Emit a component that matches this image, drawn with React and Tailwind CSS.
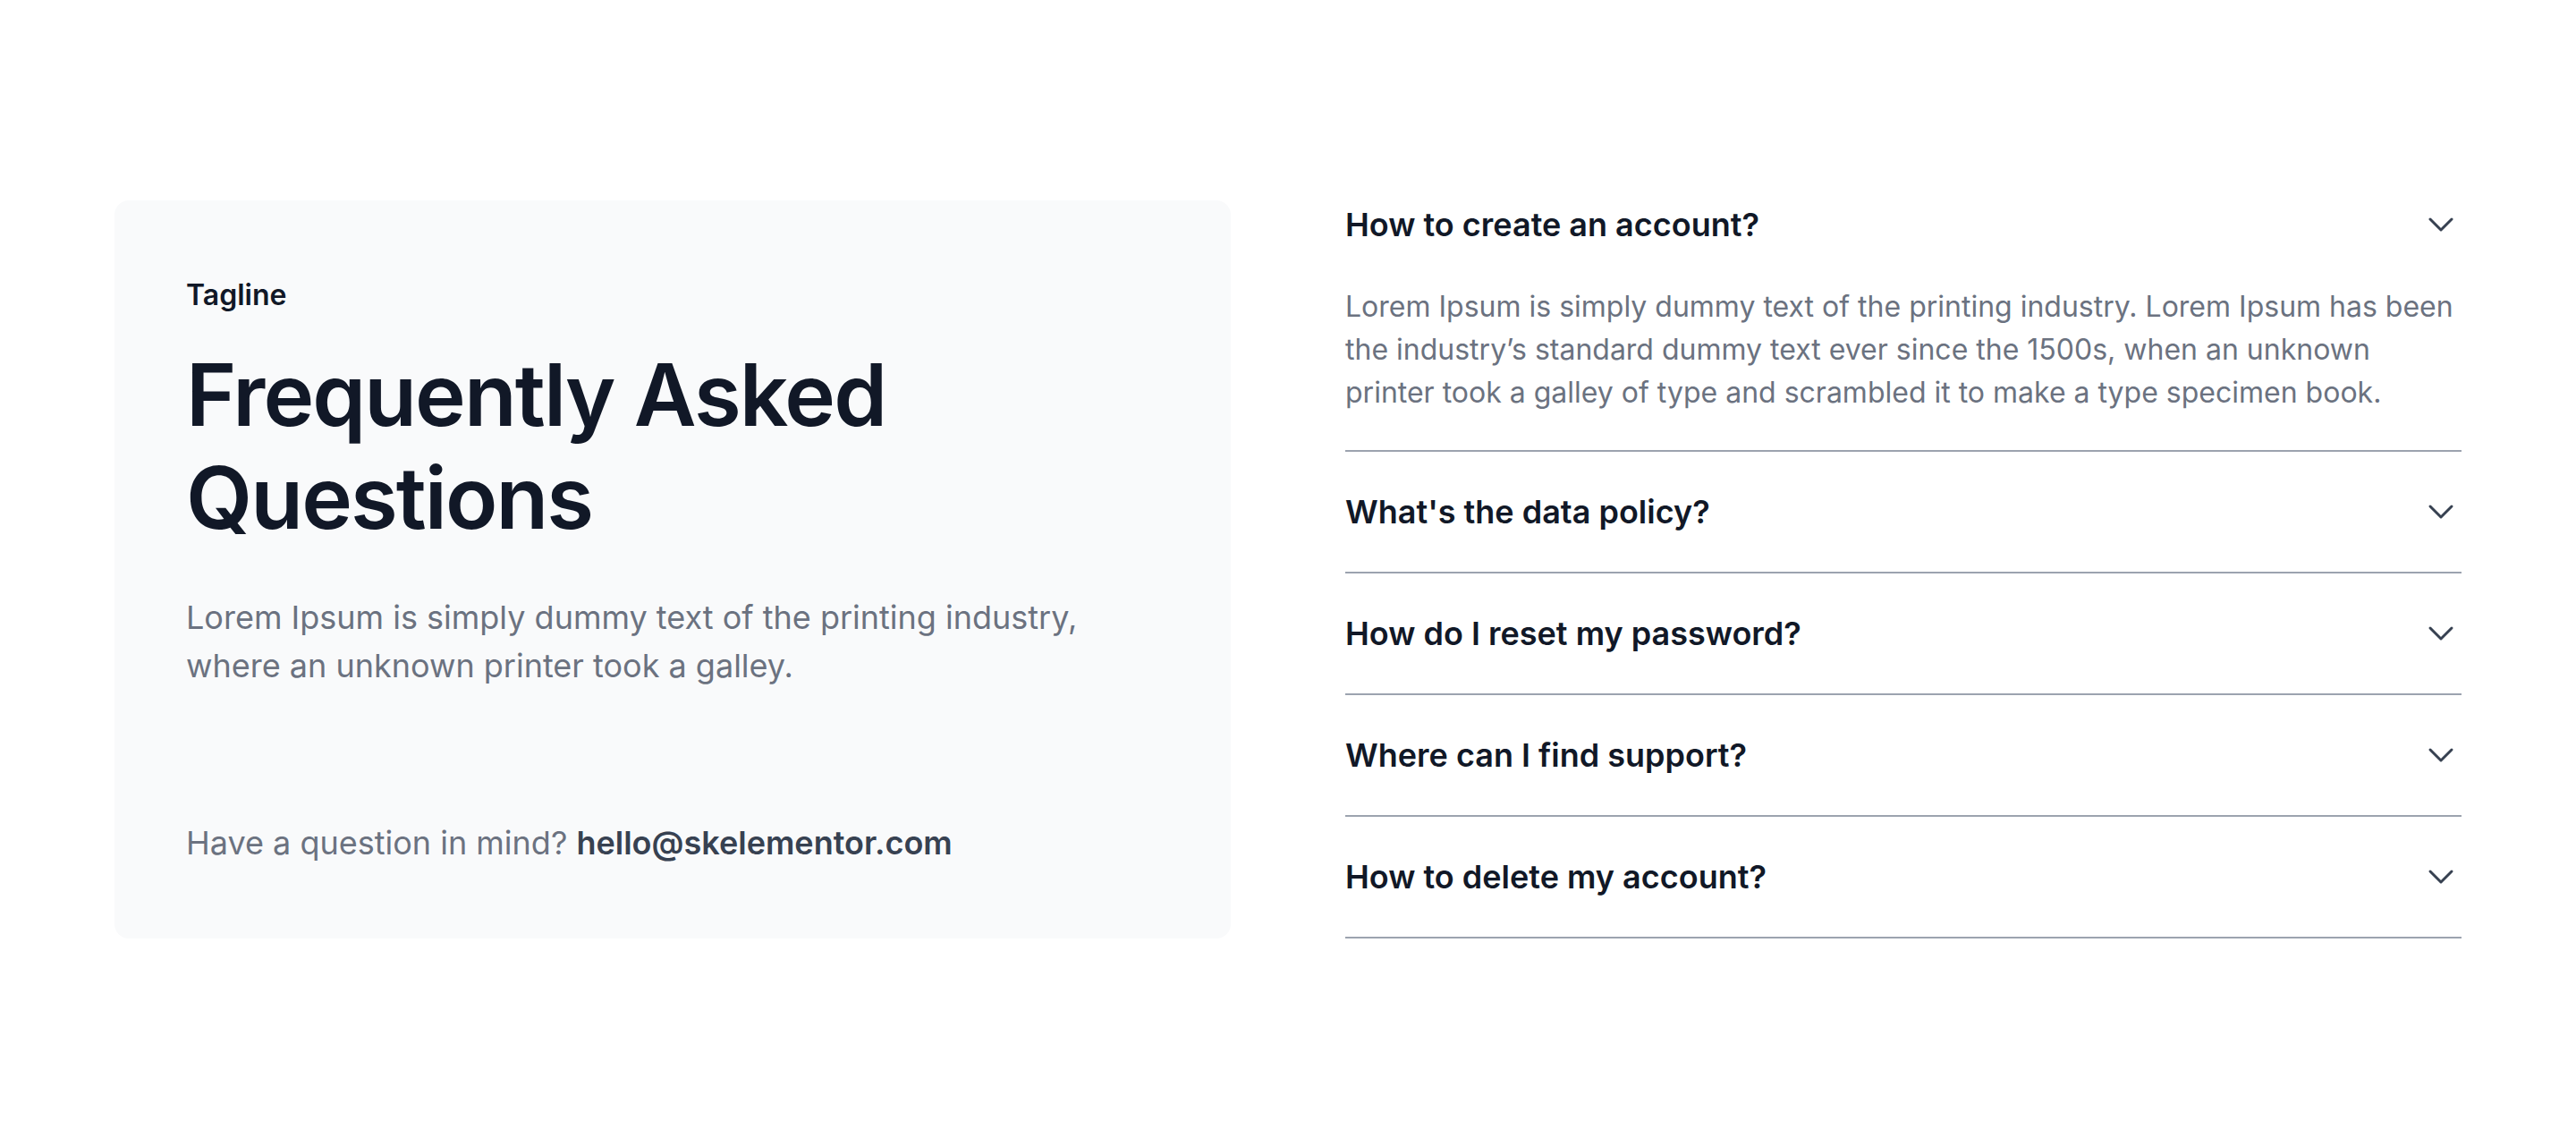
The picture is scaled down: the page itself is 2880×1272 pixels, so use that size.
import { ChevronDown } from 'lucide-react';

const faqs = [
  {
    q: 'How to create an account?',
    a: 'Lorem Ipsum is simply dummy text of the printing industry. Lorem Ipsum has been the industry’s standard dummy text ever since the 1500s, when an unknown printer took a galley of type and scrambled it to make a type specimen book.',
    open: true,
  },
  { q: "What's the data policy?" },
  { q: 'How do I reset my password?' },
  { q: 'Where can I find support?' },
  { q: 'How to delete my account?' },
];

export default function App() {
  return (
    <div
      className="min-h-screen bg-white px-[128px] pt-[224px] pb-[223px]"
      style={{ fontFamily: 'Inter, "Noto Sans", sans-serif' }}
    >
      <div className="grid grid-cols-2 gap-[128px]">
        {/* Intro card */}
        <div className="flex flex-col justify-between rounded-[16px] bg-[#f9fafb] p-[80px]">
          <div>
            <p className="pt-[2px] text-[32px] leading-[48px] font-semibold text-[#111827]">Tagline</p>
            <h1 className="mt-[30px] text-[96px] leading-[115px] font-semibold tracking-[-0.02em] text-[#111827]">
              Frequently Asked Questions
            </h1>
            <p className="mt-[49px] max-w-[1040px] text-[36px] leading-[54px] text-[#6b7280]">
              Lorem Ipsum is simply dummy text of the printing industry, where an unknown printer took a galley.
            </p>
          </div>
          <p className="text-[36px] leading-[54px] text-[#6b7280]">
            Have a question in mind?{' '}
            <span className="font-semibold text-[#374151]">hello@skelementor.com</span>
          </p>
        </div>

        {/* Accordion */}
        <div className="flex flex-col">
          {faqs.map((f, i) => (
            <div
              key={i}
              className={`border-b-2 border-[#9ca3af] pb-[40px] ${i === 0 ? 'pt-0' : 'pt-[40px]'}`}
            >
              <div className="flex items-center justify-between">
                <h3 className="text-[36px] leading-[54px] font-semibold text-[#111827]">{f.q}</h3>
                <ChevronDown size={48} strokeWidth={1.5} className="-mr-[1px] shrink-0 text-[#374151]" />
              </div>
              {f.open && (
                <p className="mt-[41px] text-[32px] leading-[48px] text-[#6b7280]">{f.a}</p>
              )}
            </div>
          ))}
        </div>
      </div>
    </div>
  );
}
